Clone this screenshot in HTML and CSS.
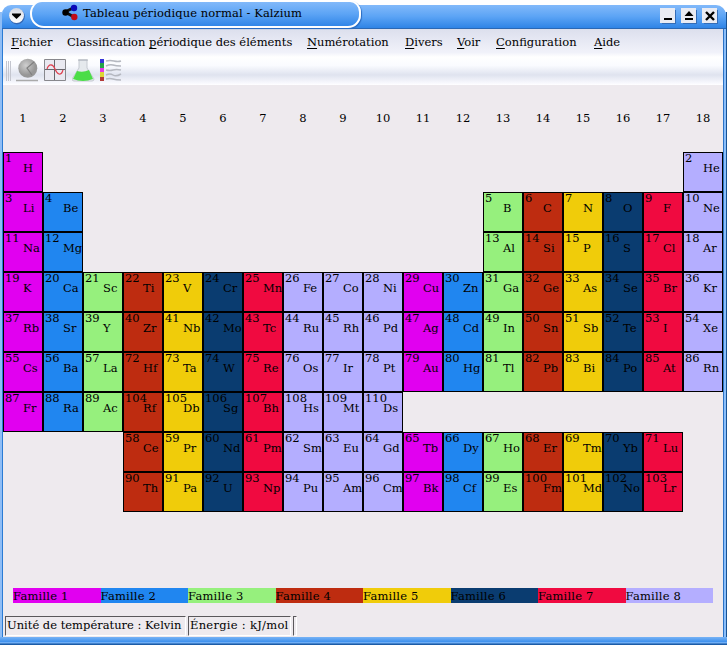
FILE: index.html
```html
<!DOCTYPE html>
<html lang="fr">
<head>
<meta charset="utf-8">
<title>Tableau périodique normal - Kalzium</title>
<link rel="stylesheet" href="styles.css">
</head>
<body>
<div class="window">
  <header class="titlebar">
    <svg class="menu-button" width="18" height="18" viewBox="0 0 18 18"><defs><linearGradient id="knob" x2="0" y2="1"><stop offset="0" stop-color="#d4d8e2"/><stop offset="1" stop-color="#fff"/></linearGradient></defs><circle cx="9" cy="9.6" r="7.8" fill="#3568b4"/><circle cx="8.5" cy="8.5" r="7.5" fill="url(#knob)"/><path d="M4 6.5h9v1.3L8.500 12 4 7.800z"/></svg>
    <div class="tab">
      <svg width="18" height="18" viewBox="0 0 18 18"><path d="M4 8 12 4M4 8l9 5" stroke="#111" stroke-width="3"/><circle cx="4.500" cy="8.500" r="3.200"/><circle cx="13" cy="4" r="3.200" fill="#0909b8"/><circle cx="13.300" cy="13" r="3.200" fill="#c20a18"/></svg>
      <span class="title">Tableau périodique normal - Kalzium</span>
    </div>
    <div class="controls">
      <svg width="16" height="16" viewBox="0 0 16 16"><path class="shade" d="M2 2h14v14H2z"/><path class="face" d="M0 0h15v15H0z"/><path d="M4 10h8v2H4z"/></svg>
      <svg width="16" height="16" viewBox="0 0 16 16"><path class="shade" d="M2 2h14v14H2z"/><path class="face" d="M0 0h15v15H0z"/><path d="M8 3l4.500 5h-9zM4 10h8v2H4z"/></svg>
      <svg width="16" height="16" viewBox="0 0 16 16"><path class="shade" d="M2 2h14v14H2z"/><path class="face" d="M0 0h15v15H0z"/><path d="M4 4l8 8M12 4l-8 8" stroke="#000" stroke-width="2.400"/></svg>
    </div>
  </header>
  <div class="bars">
    <nav class="menu">
      <span class="m1"><u>F</u>ichier</span><span class="m2">Classification <u>p</u>ériodique des éléments</span><span class="m3"><u>N</u>umérotation</span><span class="m4"><u>D</u>ivers</span><span class="m5"><u>V</u>oir</span><span class="m6"><u>C</u>onfiguration</span><span class="m7"><u>A</u>ide</span>
    </nav>
    <div class="tools">
      <svg class="grip" width="6" height="20" viewBox="0 0 6 20"><path d="M.5 0v20M2.500 0v20M4.500 0v20" stroke="#c4c6cf"/></svg>
      <svg width="24" height="24" viewBox="0 0 24 24"><defs><radialGradient id="ball" cx=".4" cy=".35"><stop offset="0" stop-color="#cfcfcf"/><stop offset="1" stop-color="#979797"/></radialGradient></defs><path d="M0 22.500h22" stroke="#aaa" stroke-width="1.500"/><circle cx="11.800" cy="10.300" r="9.500" fill="url(#ball)"/><path d="M18 4l-7 6 5 7" fill="none" stroke="#808080" stroke-width="1.200"/></svg>
      <svg width="24" height="24" viewBox="0 0 24 24"><path d="M.5 1.500h21v21h-21z" fill="#e9e9f1" stroke="#88888d"/><path d="M10.500 2v20M1 11.500h20" stroke="#66666c"/><path d="M3 11c2-6 6-5 8 0s6 8 8 1" fill="none" stroke="#e04050" stroke-width="1.200"/></svg>
      <svg width="24" height="24" viewBox="0 0 24 24"><path d="M7 2h8v8l7 11q0 2-2 2H2q-2 0-2-2L7 10z" fill="#e5e9ed" stroke="#c4c9d0"/><path d="M5 13q6 2 12-1l4 9q-10 4-20 0z" fill="#4bdd48"/><path d="M6 2h10" stroke="#aab0b9"/></svg>
      <svg width="24" height="24" viewBox="0 0 24 24"><path d="M0 1h4v4H0z" fill="#3636d8"/><path d="M0 5h4v5H0z" fill="#24a448"/><path d="M0 10h4v4H0z" fill="#e637e6"/><path d="M0 14h4v5H0z" fill="#ded634"/><path d="M0 19h4v4H0z" fill="#b43a38"/><path d="M6 3q4-1 8 0t7 0M6 8q4-2 7-1t8 1M6 12q4 1 7 0t8 0M6 17q4-2 7 0t8-1M6 21q4-1 7 0t8 1" fill="none" stroke="#b5b8c0" stroke-width="1.500"/></svg>
    </div>
  </div>
  <main>
    <div class="groups" id="groups"></div>
    <div class="table" id="table"></div>
    <div class="legend" id="legend"></div>
  </main>
  <footer class="status"><span class="temperature"><b>Unité de température : Kelvin</b></span><span class="energy"><b>Énergie : kJ/mol</b></span><span class="empty"></span></footer>
</div>
<script src="script.js"></script>
</body>
</html>
```
FILE: styles.css
```css
* { box-sizing: border-box; }
body {
  margin: 0;
  font: 11.5px/16px "DejaVu Serif", serif;
  color: #000;
  background: #fff;
}
.window {
  width: 727px;
  height: 645px;
  padding-top: 5px;
  display: flex;
  flex-direction: column;
  background: linear-gradient(#fff 0 12px, transparent 12px), linear-gradient(90deg, #8fbdf5 0 2px, transparent 2px 723px, #2c74c8 723px 724px, #8abefa 724px 726px, #175294 726px);
}
.titlebar {
  flex: none;
  position: relative;
  height: 24px;
  margin-left: 2px;
  margin-right: 1px;
  border-radius: 9px 10px 0 0;
  border-bottom: 1px solid #2b68b4;
  background: linear-gradient(#82b9fa, #5ca4f5 50%, #2f84e6);
}
.menu-button { position: absolute; left: 6px; top: 2px; }
.tab {
  position: absolute;
  left: 28px;
  top: -4px;
  width: 331px;
  height: 27px;
  padding: 2px 0 0 29px;
  display: flex;
  border: 2px solid #fff;
  border-top-width: 1px;
  border-radius: 12px 11px 13px 14px;
  background: linear-gradient(#82b9fa, #5ca4f5 50%, #3186e8);
  box-shadow: 1px 1px 1px #2a6bc0;
}
.title { margin: 1px 0 0 4px; white-space: nowrap; letter-spacing: .1px; }
.controls { position: absolute; top: 3px; right: 8px; display: flex; gap: 5px; }
.shade { fill: #346db8; }
.face { fill: #e9ebf3; }
.bars, main, .status {
  border-left: 1px solid #2a7bd4;
  margin-left: 2px;
  margin-right: 4px;
}
.bars {
  height: 56px;
  background: linear-gradient(#dcdfed 0, #f1f2fa 42%, #fff 50%, #fafbff 65%, #dfe3ef 82%, #fbfbff 98%, #fff);
}
.menu { height: 27px; padding: 5px 0 0 8px; display: flex; white-space: nowrap; }
.menu u { text-underline-offset: 2px; text-decoration-thickness: 1px; text-decoration-skip-ink: none; }
.m1 { width: 56px; }
.m2 { width: 240px; }
.m3 { width: 98px; }
.m4 { width: 52px; }
.m5 { width: 39px; }
.m6 { width: 98px; }
.tools { display: flex; gap: 4px; padding: 2px 0 0 3px; }
.grip { margin: 3px 0 0; }
main { height: 527px; background: #eeeaee; overflow: hidden; }
.groups { display: grid; grid-template-columns: repeat(18, 40px); padding-top: 25px; height: 67px; text-align: center; }
.table { display: grid; grid-template: repeat(9, 40px) / repeat(18, 40px); }
.cell { border: 1px solid #000; padding-left: 1px; white-space: nowrap; }
.number { display: block; height: 10px; line-height: 11px; }
.symbol { display: block; margin-left: 18px; height: 12px; line-height: 11px; }
.legend { display: grid; grid-template-columns: repeat(8, 1fr); grid-template-rows: 15px; margin: 76px 10px 0 10px; height: 15px; line-height: 16px; letter-spacing: .2px; }
.f1 { background: #e100f0; }
.f2 { background: #2086f0; }
.f3 { background: #96f07d; }
.f4 { background: #be2c10; }
.f5 { background: #f0cc0a; }
.f6 { background: #0a3c70; }
.f7 { background: #f00a40; }
.f8 { background: #b4aeff; }
.status { height: 25px; padding: 4px 0 0 2px; display: flex; gap: 2px; background: #eeeaee; }
.status span { height: 20px; padding-left: 1px; border: 1px solid; border-color: #5a585b #fff #fff #5a585b; }
.status b { font-weight: normal; white-space: nowrap; }
.temperature { width: 181px; }
.energy { width: 103px; letter-spacing: .28px; }
.empty { width: 4px; }
.window::after {
  content: "";
  flex: 1;
  background: linear-gradient(#78b3f5, #3e91ee 60%, #75b2f8 70%, #1b5ca8 90%);
}
```
FILE: script.js
```js
const rows = [
  [[1, 1, "H"], [18, 2, "He"]],
  [[1, 3, "Li Be"], [13, 5, "B C N O F Ne"]],
  [[1, 11, "Na Mg"], [13, 13, "Al Si P S Cl Ar"]],
  [[1, 19, "K Ca Sc Ti V Cr Mn Fe Co Ni Cu Zn Ga Ge As Se Br Kr"]],
  [[1, 37, "Rb Sr Y Zr Nb Mo Tc Ru Rh Pd Ag Cd In Sn Sb Te I Xe"]],
  [[1, 55, "Cs Ba La"], [4, 72, "Hf Ta W Re Os Ir Pt Au Hg Tl Pb Bi Po At Rn"]],
  [[1, 87, "Fr Ra Ac"], [4, 104, "Rf Db Sg Bh Hs Mt Ds"]],
  [[4, 58, "Ce Pr Nd Pm Sm Eu Gd Tb Dy Ho Er Tm Yb Lu"]],
  [[4, 90, "Th Pa U Np Pu Am Cm Bk Cf Es Fm Md No Lr"]]
];

// Family colour of a column: 1-8, then 9 and 10 stay in family 8.
const family = col => col <= 8 ? col : col <= 10 ? 8 : col - 10;

const groups = document.getElementById("groups");
for (let i = 1; i <= 18; i++) groups.insertAdjacentHTML("beforeend", `<span>${i}</span>`);

const table = document.getElementById("table");
rows.forEach((runs, r) => runs.forEach(([col, number, symbols]) =>
  symbols.split(" ").forEach((symbol, i) => {
    const cell = document.createElement("div");
    cell.className = `cell f${family(col + i)}`;
    cell.style.gridArea = `${r + 1} / ${col + i}`;
    cell.innerHTML = `<span class="number">${number + i}</span><span class="symbol">${symbol}</span>`;
    table.append(cell);
  })));

const legend = document.getElementById("legend");
for (let i = 1; i <= 8; i++) legend.insertAdjacentHTML("beforeend", `<span class="f${i}">Famille ${i}</span>`);
```
